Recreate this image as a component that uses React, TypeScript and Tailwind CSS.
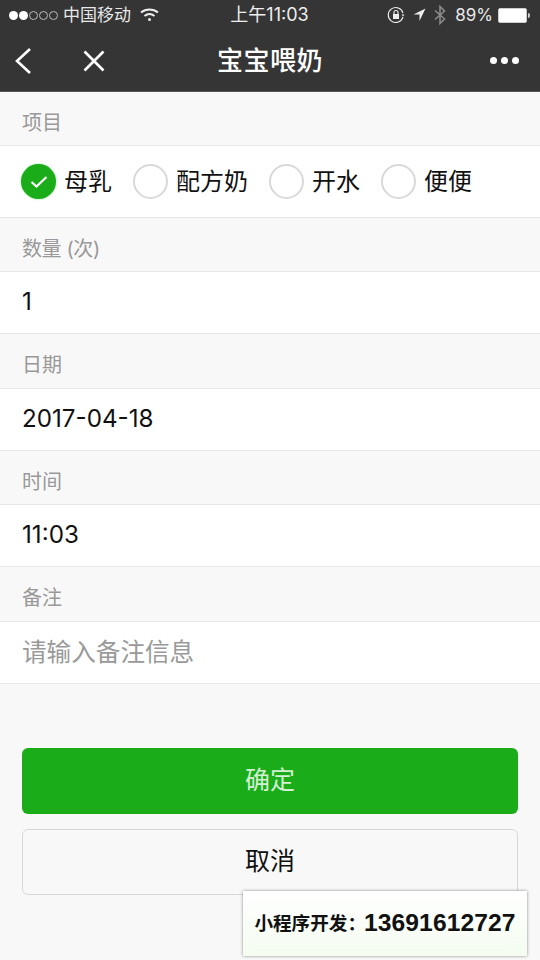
import React from 'react';

const cjk = 'font-["Inter","Noto_Sans_CJK_SC",sans-serif]';

const options = [
  { label: '母乳', checked: true },
  { label: '配方奶', checked: false },
  { label: '开水', checked: false },
  { label: '便便', checked: false },
];

const fields = [
  { label: '数量 (次)', value: '1', labelHeight: 'h-[53px] pt-[8px] tracking-[-0.4px]', valueSize: 'text-[24.2px]' },
  { label: '日期', value: '2017-04-18', labelHeight: 'h-[54px] pt-[8px]', valueSize: 'text-[24.2px]' },
  { label: '时间', value: '11:03', labelHeight: 'h-[53px] pt-[8px]', valueSize: 'text-[24.2px]' },
  { label: '备注', value: '请输入备注信息', labelHeight: 'h-[54px] pt-[8px]', valueSize: 'text-[24.6px]', placeholder: true },
];

const StatusBar = () => (
  <div className="flex h-[30px] items-center justify-between pl-[9px] pr-[10px] text-[17px] leading-none text-[#e8e8e8]">
    <div className="flex w-[180px] items-center">
      <div className="flex items-center gap-[1px]">
        <span className="h-[9px] w-[9px] rounded-full bg-white" />
        <span className="h-[9px] w-[9px] rounded-full bg-white" />
        <span className="h-[9px] w-[9px] rounded-full border border-[#bbbbbb]" />
        <span className="h-[9px] w-[9px] rounded-full border border-[#bbbbbb]" />
        <span className="h-[9px] w-[9px] rounded-full border border-[#bbbbbb]" />
      </div>
      <span className="ml-[5px] text-[17px]">中国移动</span>
      <svg className="ml-[9px]" width="19" height="14" viewBox="0 0 19 14" fill="none" stroke="#eeeeee" strokeWidth="2">
        <path d="M1 4.5C6 0.5 13 0.5 18 4.5" />
        <path d="M4.5 8C7.5 5.5 11.5 5.5 14.5 8" />
        <circle cx="9.5" cy="11.5" r="1.5" fill="#eeeeee" stroke="none" />
      </svg>
    </div>
    <span className="text-[18px] text-[#eeeeee]">上午11:03</span>
    <div className="flex w-[180px] items-center justify-end">
      <svg width="18" height="18" viewBox="0 0 18 18" fill="none" stroke="#eeeeee" strokeWidth="1.1">
        <path d="M16 11A7.5 7.5 0 1 1 16 7" />
        <rect x="6" y="8" width="6" height="5" fill="#eeeeee" stroke="none" />
        <path d="M7 8V6.5a2 2 0 0 1 4 0V8" />
        <path d="M14.5 8.5h3l-1.5 2z" fill="#eeeeee" stroke="none" />
      </svg>
      <svg className="ml-[8px]" width="13" height="14" viewBox="0 0 13 14" fill="#eeeeee">
        <path d="M12.5 0.5L0.5 6.5H6.5V13Z" />
      </svg>
      <svg className="ml-[8px]" width="12" height="20" viewBox="0 0 12 20" fill="none" stroke="#8a8a8a" strokeWidth="1.6">
        <path d="M1 5.5L10.5 14L6 18.5V1.5L10.5 6L1 14.5" />
      </svg>
      <span className="ml-[9px] text-[17px]">89%</span>
      <div className="ml-[5px] flex items-center">
        <div className="h-[15px] w-[29px] rounded-[2px] border border-[#cccccc] bg-white" />
        <div className="ml-[1px] h-[5px] w-[2px] rounded-r-sm bg-[#cccccc]" />
      </div>
    </div>
  </div>
);

const NavBar = () => (
  <div className="grid h-[62px] grid-cols-[1fr_auto_1fr] items-center border-b border-[#555555]">
    <div className="flex items-center pl-[15px]">
      <svg width="16" height="26" viewBox="0 0 16 26" fill="none" stroke="#ffffff" strokeWidth="2.6">
        <path d="M15 1L2 13L15 25" />
      </svg>
      <svg className="ml-[52px]" width="22" height="22" viewBox="0 0 22 22" fill="none" stroke="#ffffff" strokeWidth="2.6">
        <path d="M1.5 1.5L20.5 20.5M20.5 1.5L1.5 20.5" />
      </svg>
    </div>
    <span className="text-[26px] font-medium tracking-[0.5px] text-white">宝宝喂奶</span>
    <div className="flex items-center justify-end gap-[4px] pr-[21px]">
      <span className="h-[7px] w-[7px] rounded-full bg-white" />
      <span className="h-[7px] w-[7px] rounded-full bg-white" />
      <span className="h-[7px] w-[7px] rounded-full bg-white" />
    </div>
  </div>
);

const Label = ({ children, height }: { children: React.ReactNode; height: string }) => (
  <div className={`flex items-center pl-[22px] text-[20px] text-[#999999] ${height}`}>{children}</div>
);

const App = () => {
  return (
    <div className={`flex h-[960px] w-[540px] flex-col overflow-hidden bg-[#f8f8f8] ${cjk}`}>
      <div className="bg-[#353535]">
        <StatusBar />
        <NavBar />
      </div>

      <Label height="h-[53px] pt-[8px]">项目</Label>
      <div className="flex h-[73px] items-center border-y border-[#e8e8e8] bg-white pl-[21px]">
        {options.map((opt) => (
          <div key={opt.label} className="mr-[21px] flex items-center">
            {opt.checked ? (
              <span className="flex h-[35px] w-[35px] items-center justify-center rounded-full bg-[#1aad19] shadow-[0_0_2px_#7fe07f]">
                <svg width="18" height="14" viewBox="0 0 18 14" fill="none" stroke="#ffffff" strokeWidth="2.2">
                  <path d="M1.5 7L6.5 11.5L16.5 2" />
                </svg>
              </span>
            ) : (
              <span className="h-[35px] w-[35px] rounded-full border-2 border-[#d9d9d9] bg-white" />
            )}
            <span className="ml-[8px] text-[24px] text-[#111111]">{opt.label}</span>
          </div>
        ))}
      </div>

      {fields.map((f) => (
        <React.Fragment key={f.label}>
          <Label height={f.labelHeight}>{f.label}</Label>
          <div
            className={`flex h-[63px] items-center border-y border-[#e8e8e8] bg-white pl-[22px] ${f.valueSize} ${
              f.placeholder ? 'text-[#999999]' : 'text-[#111111]'
            }`}
          >
            {f.value}
          </div>
        </React.Fragment>
      ))}

      <div className="mt-[64px] flex flex-col gap-[15px] px-[22px]">
        <button className="h-[66px] rounded-[6px] bg-[#1aad19] text-[25px] text-[#d4f0d4]">确定</button>
        <button className="h-[66px] rounded-[6px] border border-[#d8d8d8] bg-[#f8f8f8] text-[25px] text-[#111111]">取消</button>
      </div>

      <div className='absolute left-[243px] top-[891px] flex h-[65px] w-[284px] items-center justify-center bg-gradient-to-b from-white to-[#f4fcf0] font-["Liberation_Sans","Noto_Sans_CJK_SC",sans-serif] shadow-[0_0_3px_rgba(0,0,0,0.45)]'>
        <span className="text-[18.6px] font-bold text-[#111111]">小程序开发：</span>
        <span className="-ml-[2px] text-[24.6px] font-bold tracking-[0.1px] text-[#111111]">13691612727</span>
      </div>
    </div>
  );
};

export default App;
